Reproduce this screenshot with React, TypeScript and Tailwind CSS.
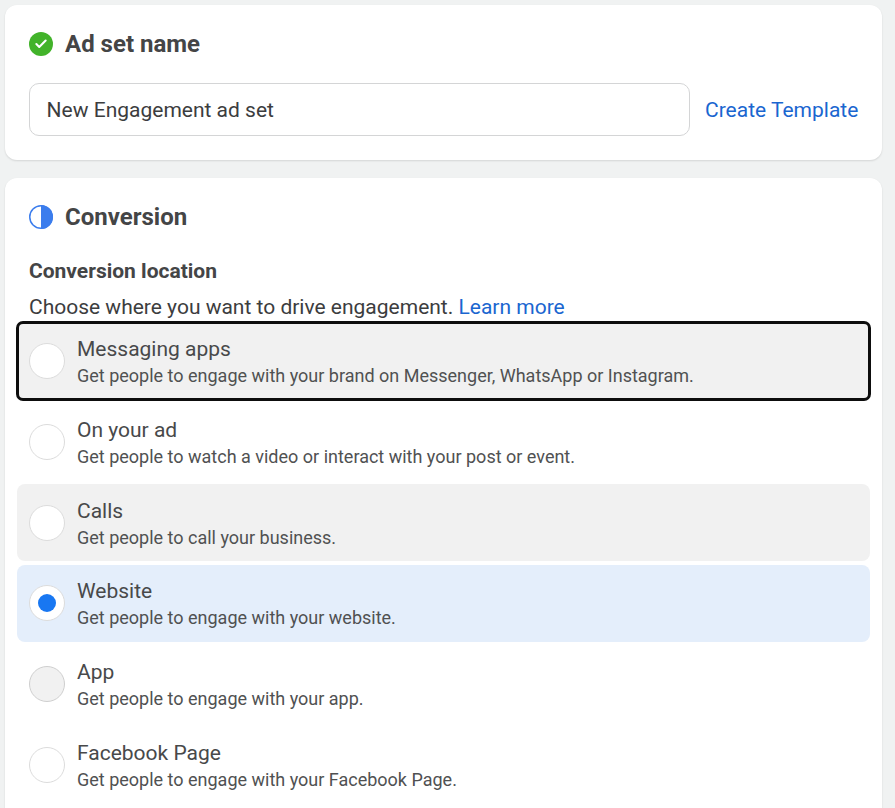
import { Check } from "lucide-react"

const options = [
  { title: "Messaging apps", sub: "Get people to engage with your brand on Messenger, WhatsApp or Instagram.", state: "focus" },
  { title: "On your ad", sub: "Get people to watch a video or interact with your post or event.", state: "" },
  { title: "Calls", sub: "Get people to call your business.", state: "hover" },
  { title: "Website", sub: "Get people to engage with your website.", state: "selected" },
  { title: "App", sub: "Get people to engage with your app.", state: "press" },
  { title: "Facebook Page", sub: "Get people to engage with your Facebook Page.", state: "" },
]

function rowClass(state: string) {
  if (state === "focus") return "mx-[1px] pl-[11px] rounded-[5px] bg-[#f1f1f1] outline-[3px] outline-[#0d0d0d] -outline-offset-1"
  if (state === "hover") return "pl-3 rounded-[8px] bg-[#f1f1f1]"
  if (state === "selected") return "pl-3 rounded-[8px] bg-[#e4eefb]"
  return "pl-3 rounded-[8px] bg-white"
}

export default function App() {
  return (
    <div className="h-[808px] overflow-hidden bg-[#f0f2f2] pl-[5px] pr-[13px] pt-[5px] font-['Roboto',sans-serif] text-[#444546]">
      <div className="h-[155px] rounded-[12px] bg-white px-6 pt-6 shadow-[0_1px_2px_rgba(0,0,0,0.12)]">
        <div className="flex h-[30px] items-center gap-3">
          <div className="flex h-6 w-6 items-center justify-center rounded-full bg-[#42b32a]">
            <Check className="h-[14px] w-[14px] text-white" strokeWidth={3.5} />
          </div>
          <h2 className="text-[24px] font-bold leading-[30px]">Ad set name</h2>
        </div>
        <div className="mt-[24px] flex items-center gap-[15px]">
          <div className="flex h-[53px] w-[661px] shrink-0 items-center rounded-[10px] border border-[#d4d5d6] pl-[16.6px] pt-[2px] text-[21px] text-[#3c3d3e]">
            New Engagement ad set
          </div>
          <a className="whitespace-nowrap pt-[2px] text-[21px] text-[#1a66d0]">Create Template</a>
        </div>
      </div>

      <div className="mt-[18px] rounded-[12px] bg-white px-3 pt-6 pb-10 shadow-[0_1px_2px_rgba(0,0,0,0.12)]">
        <div className="flex h-[30px] items-center gap-3 pl-3">
          <svg viewBox="0 0 24 24" className="h-6 w-6">
            <circle cx="12" cy="12" r="11.25" fill="white" stroke="#3b7ded" strokeWidth="1.5" />
            <path d="M12 0a12 12 0 0 1 0 24z" fill="#3b7ded" />
          </svg>
          <h2 className="text-[24px] font-bold leading-[30px]">Conversion</h2>
        </div>
        <div className="mt-[26px] pl-3 text-[21px] font-bold leading-[26px]">Conversion location</div>
        <div className="mt-[10px] pl-3 text-[21px] leading-[26px] text-[#3c3d3e]">
          Choose where you want to drive engagement. <a className="text-[#1a66d0]">Learn more</a>
        </div>
        <div className="mt-[2.6px] flex flex-col gap-1">
          {options.map((o) => (
            <div key={o.title} className={`flex h-[76.8px] items-center gap-3 ${rowClass(o.state)}`}>
              <div
                className={`flex h-[36px] w-[36px] shrink-0 items-center justify-center rounded-full border ${
                  o.state === "press" ? "border-[#cfcfcf] bg-[#f1f1f1]" : "border-[#dcdcdc] bg-white"
                }`}
              >
                {o.state === "selected" && <div className="h-[18px] w-[18px] rounded-full bg-[#1877f2]" />}
              </div>
              <div>
                <div className="text-[21px] leading-[30px] text-[#48494a]">{o.title}</div>
                <div className="text-[18px] leading-[24px] text-[#505152]">{o.sub}</div>
              </div>
            </div>
          ))}
        </div>
      </div>
    </div>
  )
}
